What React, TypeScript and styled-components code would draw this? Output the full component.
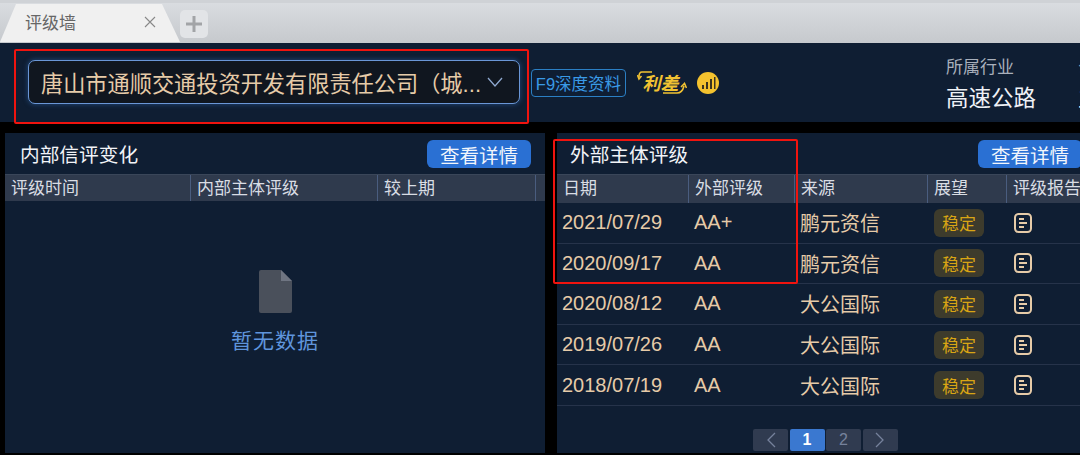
import React from 'react';
import styled, {createGlobalStyle} from 'styled-components';

const GlobalStyle = createGlobalStyle`
  html, body { margin: 0; padding: 0; background: #000; overflow: hidden; }
  body { font-family: "Liberation Sans", "Noto Sans CJK SC", sans-serif; }
`;

const Page = styled.div`
  position: relative;
  width: 1080px;
  height: 455px;
  overflow: hidden;
  background: #000;
`;

const TabBar = styled.div`
  height: 43px;
  box-sizing: border-box;
  border-top: 3px solid #cfd2d6;
  background: linear-gradient(#d9dce0, #c6c9cd);
  display: flex;
  align-items: flex-end;
`;

const Tab = styled.div`
  width: 180px;
  height: 38px;
  box-sizing: border-box;
  margin-bottom: 1px;
  padding: 0 24px 3px 25px;
  background: #f0f0f0;
  clip-path: polygon(16px 0, 162px 0, 180px 100%, 0 100%);
  display: flex;
  align-items: center;
  justify-content: space-between;
  font-size: 17px;
  color: #666;
`;

const NewTab = styled.div`
  width: 28px;
  height: 28px;
  margin: 0 0 5px 0;
  border-radius: 5px;
  background: #e2e4e7;
  display: flex;
  align-items: center;
  justify-content: center;
`;

const Header = styled.div`
  height: 79px;
  box-sizing: border-box;
  background: #0f1e33;
  padding: 17px 0 0 28px;
  display: flex;
  align-items: flex-start;
  > * { flex-shrink: 0; }
`;

const Select = styled.div`
  width: 492px;
  height: 44px;
  box-sizing: border-box;
  padding: 0 16px 0 12px;
  background: #10161f;
  border: 1px solid #6a96d6;
  border-radius: 7px;
  box-shadow: 0 0 4px 1px #1d3d66;
  display: flex;
  align-items: center;
  justify-content: space-between;
  color: #e6cba8;
  font-size: 22.2px;
  white-space: nowrap;
`;

const F9Badge = styled.div`
  width: 95px;
  height: 28px;
  box-sizing: border-box;
  margin: 9px 0 0 11px;
  border: 1px solid #2b7fc4;
  border-radius: 4px;
  color: #3a9ae6;
  font-size: 16.5px;
  display: flex;
  align-items: center;
  justify-content: center;
  white-space: nowrap;
`;

const SpreadLogo = styled.div`
  position: relative;
  width: 50px;
  height: 28px;
  box-sizing: border-box;
  padding: 0 8px 3px 5px;
  margin: 9px 0 0 11px;
  color: #f1c232;
  font-size: 18px;
  font-weight: 700;
  font-style: italic;
  display: flex;
  align-items: center;
  justify-content: center;
  white-space: nowrap;
`;

const SpreadArrows = styled.svg`
  position: absolute;
  left: 0;
  top: 0;
`;

const RankIcon = styled.svg`
  margin: 12px 0 0 10px;
`;

const Industry = styled.div`
  margin-left: 227px;
  width: 132px;
  margin-top: -2px;
  display: flex;
  flex-direction: column;
  gap: 6px;
  & + & { margin-left: 0; }
`;

const IndustryLabel = styled.div`
  font-size: 17px;
  line-height: 20px;
  color: #a9b0bc;
  white-space: nowrap;
`;

const IndustryValue = styled.div`
  font-size: 22.5px;
  line-height: 30px;
  color: #eef1f6;
  white-space: nowrap;
`;

const Panels = styled.div`
  margin-top: 11px;
  padding-left: 5px;
  display: flex;
  gap: 12px;
`;

const Panel = styled.section<{$width: number}>`
  width: ${p => p.$width}px;
  flex-shrink: 0;
  height: 320px;
  background: #0f1e33;
  display: flex;
  flex-direction: column;
`;

const PanelHead = styled.div<{$pad: number; $right: number}>`
  height: 41px;
  box-sizing: border-box;
  padding: 4px ${p => p.$right}px 4px ${p => p.$pad}px;
  display: flex;
  align-items: center;
  justify-content: space-between;
`;

const PanelTitle = styled.h3`
  margin: 0;
  font-size: 19.7px;
  font-weight: 400;
  color: #f2f4f8;
`;

const DetailButton = styled.button`
  width: 104px;
  height: 28px;
  padding: 0;
  border: none;
  border-radius: 6px;
  background: #2a70d3;
  color: #f2f6fc;
  font: inherit;
  font-size: 19.5px;
  flex-shrink: 0;
`;

const TableRow = styled.div<{$cols: string}>`
  display: grid;
  grid-template-columns: ${p => p.$cols};
`;

const HeadRow = styled(TableRow)<{$h: number}>`
  height: ${p => p.$h}px;
  background: #2f3a4d;
  border-top: 1px solid #3a4659;
`;

const HeadCell = styled.div`
  box-sizing: border-box;
  padding-left: 6px;
  border-right: 1px solid #4a5d7f;
  font-size: 17px;
  line-height: 28px;
  color: #d9dde4;
  white-space: nowrap;
  overflow: hidden;
  &:last-child { border-right: none; }
`;

const BodyRow = styled(TableRow)`
  height: 40.6px;
  box-sizing: border-box;
  border-bottom: 1px solid #26334a;
  align-items: center;
`;

const BodyCell = styled.div`
  padding-left: 5px;
  font-size: 20px;
  color: #e6cba8;
  white-space: nowrap;
`;

const Outlook = styled.span`
  display: inline-flex;
  align-items: center;
  justify-content: center;
  width: 50px;
  height: 28px;
  margin-left: 1px;
  border-radius: 6px;
  background: #3d3b2c;
  color: #d9a514;
  font-size: 17px;
`;

const DocIcon = styled.svg`
  display: block;
  margin-left: 2px;
`;

const Empty = styled.div`
  flex: 1;
  padding-top: 69px;
  display: flex;
  flex-direction: column;
  align-items: center;
  gap: 14px;
`;

const EmptyText = styled.div`
  font-size: 21px;
  line-height: 28px;
  color: #5f95dc;
  letter-spacing: 1px;
`;

const Pager = styled.div`
  margin-top: 23px;
  padding-left: 196px;
  display: flex;
  gap: 1.5px;
`;

const PageBtn = styled.div<{$active?: boolean}>`
  width: 35px;
  height: 22px;
  border-radius: 2px;
  background: ${p => (p.$active ? '#3a78d0' : '#303b50')};
  color: ${p => (p.$active ? '#fff' : '#76829c')};
  font-size: 16px;
  font-weight: ${p => (p.$active ? 700 : 400)};
  display: flex;
  align-items: center;
  justify-content: center;
`;

const RedBox = styled.div<{$x: number; $y: number; $w: number; $h: number}>`
  position: absolute;
  left: ${p => p.$x}px;
  top: ${p => p.$y}px;
  width: ${p => p.$w}px;
  height: ${p => p.$h}px;
  box-sizing: border-box;
  border: 2px solid #f0140f;
  border-radius: 2px;
  pointer-events: none;
`;

const leftCols = '186px 187px 158px 9px';
const rightCols = '132px 106px 133px 79px 80px';

const rows = [
  ['2021/07/29', 'AA+', '鹏元资信'],
  ['2020/09/17', 'AA', '鹏元资信'],
  ['2020/08/12', 'AA', '大公国际'],
  ['2019/07/26', 'AA', '大公国际'],
  ['2018/07/19', 'AA', '大公国际'],
];

const Chevron: React.FC<{dir: 'left' | 'right'}> = ({dir}) => (
  <svg width="12" height="16" viewBox="0 0 12 16" fill="none" stroke="#76829c" strokeWidth="1.3">
    <path d={dir === 'left' ? 'M10 1 3 8l7 7' : 'M2 1l7 7-7 7'} />
  </svg>
);

const App: React.FC = () => (
  <Page>
    <GlobalStyle />
    <TabBar>
      <Tab>
        <span>评级墙</span>
        <svg width="12" height="12" viewBox="0 0 12 12" stroke="#888" strokeWidth="1.1">
          <path d="M1 1l10 10M11 1 1 11" />
        </svg>
      </Tab>
      <NewTab>
        <svg width="18" height="18" viewBox="0 0 18 18" stroke="#a2a4a7" strokeWidth="3">
          <path d="M9 1v16M1 9h16" />
        </svg>
      </NewTab>
    </TabBar>
    <Header>
      <Select>
        <span>唐山市通顺交通投资开发有限责任公司（城...</span>
        <svg width="16" height="10" viewBox="0 0 16 10" fill="none" stroke="#8fa9d0" strokeWidth="1.3">
          <path d="M1 1l7 8 7-8" />
        </svg>
      </Select>
      <F9Badge>F9深度资料</F9Badge>
      <SpreadLogo>
        <SpreadArrows width="50" height="28" viewBox="0 0 50 28" fill="none" stroke="#f1c232" strokeWidth="1.6">
          <path d="M15 3H5C3 3 2 5 2 8" />
          <path d="M0.500 6 2 10l2.500-3" />
          <path d="M26 24h14c4 0 6-3 7-7" />
          <path d="M44 18l3.500-3.500L49.500 19" />
        </SpreadArrows>
        利差
      </SpreadLogo>
      <RankIcon width="22" height="22" viewBox="0 0 22 22">
        <circle cx="11" cy="11" r="11" fill="#f4c22e" />
        <path d="M5 13h2v4H5zM9 10h2v7H9zM13 7h2v10h-2zM17 5h1.500v12H17z" fill="#3a3320" />
      </RankIcon>
      <Industry>
        <IndustryLabel>所属行业</IndustryLabel>
        <IndustryValue>高速公路</IndustryValue>
      </Industry>
      <Industry>
        <IndustryLabel>公司</IndustryLabel>
        <IndustryValue>主体</IndustryValue>
      </Industry>
    </Header>
    <Panels>
      <Panel $width={540}>
        <PanelHead $pad={15} $right={14}>
          <PanelTitle>内部信评变化</PanelTitle>
          <DetailButton>查看详情</DetailButton>
        </PanelHead>
        <HeadRow $cols={leftCols} $h={26}>
          <HeadCell>评级时间</HeadCell>
          <HeadCell>内部主体评级</HeadCell>
          <HeadCell>较上期</HeadCell>
          <HeadCell />
        </HeadRow>
        <Empty>
          <svg width="33" height="43" viewBox="0 0 33 43">
            <path d="M2 0h20l11 11v30a2 2 0 0 1-2 2H2a2 2 0 0 1-2-2V2a2 2 0 0 1 2-2z" fill="#4a505b" />
            <path d="M22 0l11 11H22z" fill="#6f7582" />
          </svg>
          <EmptyText>暂无数据</EmptyText>
        </Empty>
      </Panel>
      <Panel $width={525}>
        <PanelHead $pad={13} $right={0}>
          <PanelTitle>外部主体评级</PanelTitle>
          <DetailButton>查看详情</DetailButton>
        </PanelHead>
        <HeadRow $cols={rightCols} $h={28}>
          <HeadCell>日期</HeadCell>
          <HeadCell>外部评级</HeadCell>
          <HeadCell>来源</HeadCell>
          <HeadCell>展望</HeadCell>
          <HeadCell>评级报告</HeadCell>
        </HeadRow>
        {rows.map(([date, rating, source]) => (
          <BodyRow key={date} $cols={rightCols}>
            <BodyCell>{date}</BodyCell>
            <BodyCell>{rating}</BodyCell>
            <BodyCell>{source}</BodyCell>
            <BodyCell>
              <Outlook>稳定</Outlook>
            </BodyCell>
            <BodyCell>
              <DocIcon width="18" height="20" viewBox="0 0 18 20" fill="none" stroke="#e6cba8" strokeWidth="2">
                <rect x="1" y="1" width="16" height="18" rx="3.500" />
                <path d="M5 6h5M5 10h8M5 14h5" strokeWidth="1.800" />
              </DocIcon>
            </BodyCell>
          </BodyRow>
        ))}
        <Pager>
          <PageBtn>
            <Chevron dir="left" />
          </PageBtn>
          <PageBtn $active>1</PageBtn>
          <PageBtn>2</PageBtn>
          <PageBtn>
            <Chevron dir="right" />
          </PageBtn>
        </Pager>
      </Panel>
    </Panels>
    <RedBox $x={14} $y={49} $w={515} $h={75} />
    <RedBox $x={553} $y={139} $w={245} $h={145} />
  </Page>
);

export default App;
